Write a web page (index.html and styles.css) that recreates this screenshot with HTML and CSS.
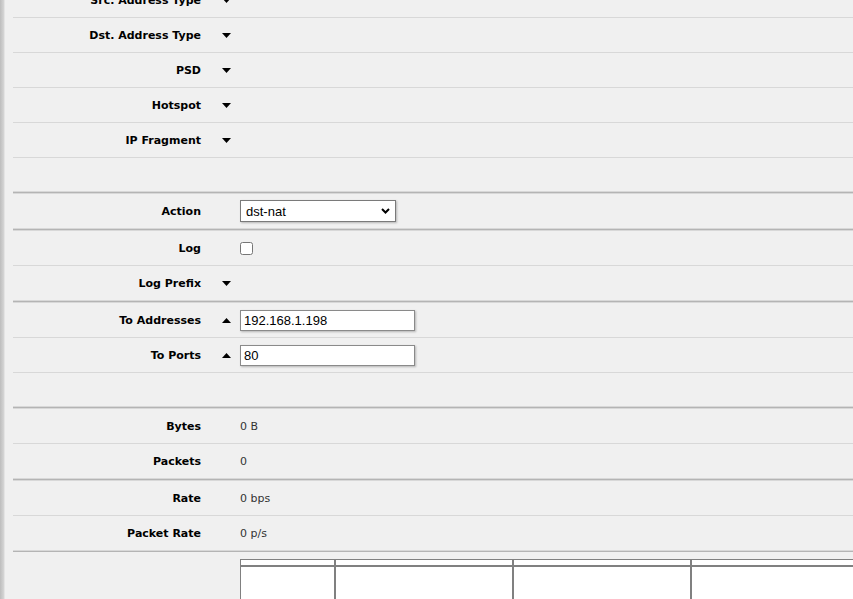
FILE: index.html
```html
<!DOCTYPE html>
<html lang="en">
<head>
    <meta charset="UTF-8">
    <meta name="viewport" content="width=device-width, initial-scale=1.0">
    <title>NAT Rule</title>
    <link rel="stylesheet" href="styles.css">
</head>
<body>

<div class="frame">
    <div class="side"></div>

    <div class="form">
        <!-- Extra matchers (collapsed) -->
        <div class="section">
            <div class="row">
                <div class="label">Src. Address Type</div>
                <div class="toggle"><svg width="9" height="5" viewBox="0 0 9 5"><polygon points="0,0 9,0 4.5,5" fill="#000"/></svg></div>
                <div class="value"></div>
            </div>
            <div class="row">
                <div class="label">Dst. Address Type</div>
                <div class="toggle"><svg width="9" height="5" viewBox="0 0 9 5"><polygon points="0,0 9,0 4.5,5" fill="#000"/></svg></div>
                <div class="value"></div>
            </div>
            <div class="row">
                <div class="label">PSD</div>
                <div class="toggle"><svg width="9" height="5" viewBox="0 0 9 5"><polygon points="0,0 9,0 4.5,5" fill="#000"/></svg></div>
                <div class="value"></div>
            </div>
            <div class="row">
                <div class="label">Hotspot</div>
                <div class="toggle"><svg width="9" height="5" viewBox="0 0 9 5"><polygon points="0,0 9,0 4.5,5" fill="#000"/></svg></div>
                <div class="value"></div>
            </div>
            <div class="row">
                <div class="label">IP Fragment</div>
                <div class="toggle"><svg width="9" height="5" viewBox="0 0 9 5"><polygon points="0,0 9,0 4.5,5" fill="#000"/></svg></div>
                <div class="value"></div>
            </div>
            <div class="row empty"></div>
        </div>

        <!-- Action -->
        <div class="section">
            <div class="row">
                <div class="label">Action</div>
                <div class="toggle"></div>
                <div class="value">
                    <div class="select-wrap">
                        <select class="select">
                            <option>dst-nat</option>
                        </select>
                        <svg class="chevron" width="9" height="6" viewBox="0 0 9 6"><polyline points="1,1 4.5,4.5 8,1" fill="none" stroke="#000" stroke-width="2"/></svg>
                    </div>
                </div>
            </div>
        </div>

        <!-- Logging -->
        <div class="section">
            <div class="row">
                <div class="label">Log</div>
                <div class="toggle"></div>
                <div class="value"><input type="checkbox" class="check"></div>
            </div>
            <div class="row">
                <div class="label">Log Prefix</div>
                <div class="toggle"><svg width="9" height="5" viewBox="0 0 9 5"><polygon points="0,0 9,0 4.5,5" fill="#000"/></svg></div>
                <div class="value"></div>
            </div>
        </div>

        <!-- NAT target -->
        <div class="section">
            <div class="row">
                <div class="label">To Addresses</div>
                <div class="toggle"><svg width="9" height="5" viewBox="0 0 9 5"><polygon points="0,5 9,5 4.5,0" fill="#000"/></svg></div>
                <div class="value"><input type="text" class="text-input" value="192.168.1.198"></div>
            </div>
            <div class="row">
                <div class="label">To Ports</div>
                <div class="toggle"><svg width="9" height="5" viewBox="0 0 9 5"><polygon points="0,5 9,5 4.5,0" fill="#000"/></svg></div>
                <div class="value"><input type="text" class="text-input" value="80"></div>
            </div>
            <div class="row empty"></div>
        </div>

        <!-- Counters -->
        <div class="section">
            <div class="row">
                <div class="label">Bytes</div>
                <div class="toggle"></div>
                <div class="value">0 B</div>
            </div>
            <div class="row">
                <div class="label">Packets</div>
                <div class="toggle"></div>
                <div class="value">0</div>
            </div>
        </div>

        <div class="section">
            <div class="row">
                <div class="label">Rate</div>
                <div class="toggle"></div>
                <div class="value">0 bps</div>
            </div>
            <div class="row">
                <div class="label">Packet Rate</div>
                <div class="toggle"></div>
                <div class="value">0 p/s</div>
            </div>
        </div>

        <!-- Graph table -->
        <div class="graph-row">
            <table class="graph">
                <thead>
                    <tr><th class="c1"></th><th class="c2"></th><th class="c2"></th><th class="c2"></th></tr>
                </thead>
                <tbody>
                    <tr><td></td><td></td><td></td><td></td></tr>
                </tbody>
            </table>
        </div>
    </div>
</div>

</body>
</html>
```

FILE: styles.css
```css
html, body {
    margin: 0;
    padding: 0;
    height: 100%;
    overflow: hidden;
    background-color: #f0f0f0;
}
body {
    font-family: "DejaVu Sans", Verdana, sans-serif;
    font-size: 11px;
    color: #222;
}
.frame {
    display: flex;
    min-height: 100%;
}
/* Left frame edge */
.side {
    flex: 0 0 4px;
    background: linear-gradient(to right, #bdbdbd, #d6d6d6);
    border-right: 1px solid #e4e4e4;
}
.form {
    flex: 1;
    padding-left: 8px;
    margin-top: -17px;
    min-width: 0;
}
.section {
    border-bottom: 1px solid #b4b4b4;
}
.section + .section {
    border-top: 1px solid #d8d8d8;
}
.row {
    display: grid;
    grid-template-columns: 188px 39px 1fr;
    align-items: center;
    height: 34px;
    border-bottom: 1px solid #d8d8d8;
}
.row.empty {
    height: 33px;
}
.label {
    text-align: right;
    font-weight: bold;
    color: #000;
    white-space: nowrap;
}
.toggle {
    padding-left: 21px;
    display: flex;
    align-items: center;
}
.value {
    color: #333;
    display: flex;
    align-items: center;
}
/* Form controls */
.select-wrap {
    position: relative;
    display: inline-block;
}
.select {
    -webkit-appearance: none;
    appearance: none;
    width: 156px;
    height: 22px;
    margin: 0;
    padding: 0 0 0 5px;
    border: 1px solid #7a7a7a;
    border-radius: 0;
    background-color: #fff;
    box-shadow: 1px 1px 2px rgba(0, 0, 0, 0.25);
    font-family: "Liberation Sans", Arial, sans-serif;
    font-size: 13px;
    color: #000;
}
.chevron {
    position: absolute;
    right: 6px;
    top: 8px;
    pointer-events: none;
}
.check {
    margin: 0;
    width: 13px;
    height: 13px;
}
.text-input {
    box-sizing: border-box;
    width: 175px;
    height: 21px;
    margin: 0;
    padding: 0 3px;
    border: 1px solid #8a8a8a;
    box-shadow: 1px 1px 2px rgba(0, 0, 0, 0.25);
    background-color: #fff;
    font-family: "Liberation Sans", Arial, sans-serif;
    font-size: 13px;
    color: #000;
    outline: none;
}
/* Graph table */
.graph-row {
    padding: 7px 0 0 227px;
}
.graph {
    table-layout: fixed;
    width: 629px;
    border-spacing: 0;
    background-color: #fff;
}
.graph th, .graph td {
    border: 1px solid #808080;
    padding: 0;
}
.graph th {
    height: 5px;
}
.graph td {
    height: 60px;
}
.graph .c1 {
    width: 93px;
}
.graph .c2 {
    width: 176px;
}
```
